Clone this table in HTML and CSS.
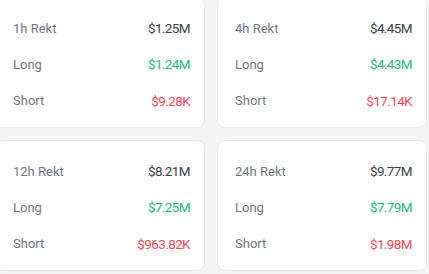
FILE: index.html
```html
<!DOCTYPE html>
<html>
<head>
<meta charset="utf-8">
<link rel="stylesheet" href="styles.css">
</head>
<body>
<div class="grid">
  <div class="card">
    <div class="row"><span class="label">1h Rekt</span><span class="val">$1.25M</span></div>
    <div class="row"><span class="label">Long</span><span class="val up">$1.24M</span></div>
    <div class="row"><span class="label">Short</span><span class="val down">$9.28K</span></div>
  </div>
  <div class="card">
    <div class="row"><span class="label">4h Rekt</span><span class="val">$4.45M</span></div>
    <div class="row"><span class="label">Long</span><span class="val up">$4.43M</span></div>
    <div class="row"><span class="label">Short</span><span class="val down">$17.14K</span></div>
  </div>
  <div class="card">
    <div class="row"><span class="label">12h Rekt</span><span class="val">$8.21M</span></div>
    <div class="row"><span class="label">Long</span><span class="val up">$7.25M</span></div>
    <div class="row"><span class="label">Short</span><span class="val down">$963.82K</span></div>
  </div>
  <div class="card">
    <div class="row"><span class="label">24h Rekt</span><span class="val">$9.77M</span></div>
    <div class="row"><span class="label">Long</span><span class="val up">$7.79M</span></div>
    <div class="row"><span class="label">Short</span><span class="val down">$1.98M</span></div>
  </div>
</div>
</body>
</html>
```
FILE: styles.css
```css
html, body {
  margin: 0;
  padding: 0;
  background: #f5f5f5;
  overflow: hidden;
}
body {
  font-family: Roboto, "Liberation Sans", sans-serif;
  font-size: 13.5px;
}
.grid {
  display: grid;
  grid-template-columns: 210px 210px;
  grid-template-rows: 131px 131px;
  column-gap: 12px;
  row-gap: 12px;
  margin-left: -5px;
  margin-top: -3px;
}
.card {
  background: #ffffff;
  border: 1px solid #e9eaec;
  border-radius: 8px;
  box-sizing: border-box;
  padding: 12px 14px 8px 17px;
  display: flex;
  flex-direction: column;
}
.row {
  height: 37px;
  display: flex;
  align-items: center;
  justify-content: space-between;
}
.label {
  color: #6f7582;
  font-size: 13px;
}
.val {
  color: #3a3f46;
  letter-spacing: -0.6px;
}
.up {
  color: #25b884;
}
.down {
  color: #f6465d;
}
```
